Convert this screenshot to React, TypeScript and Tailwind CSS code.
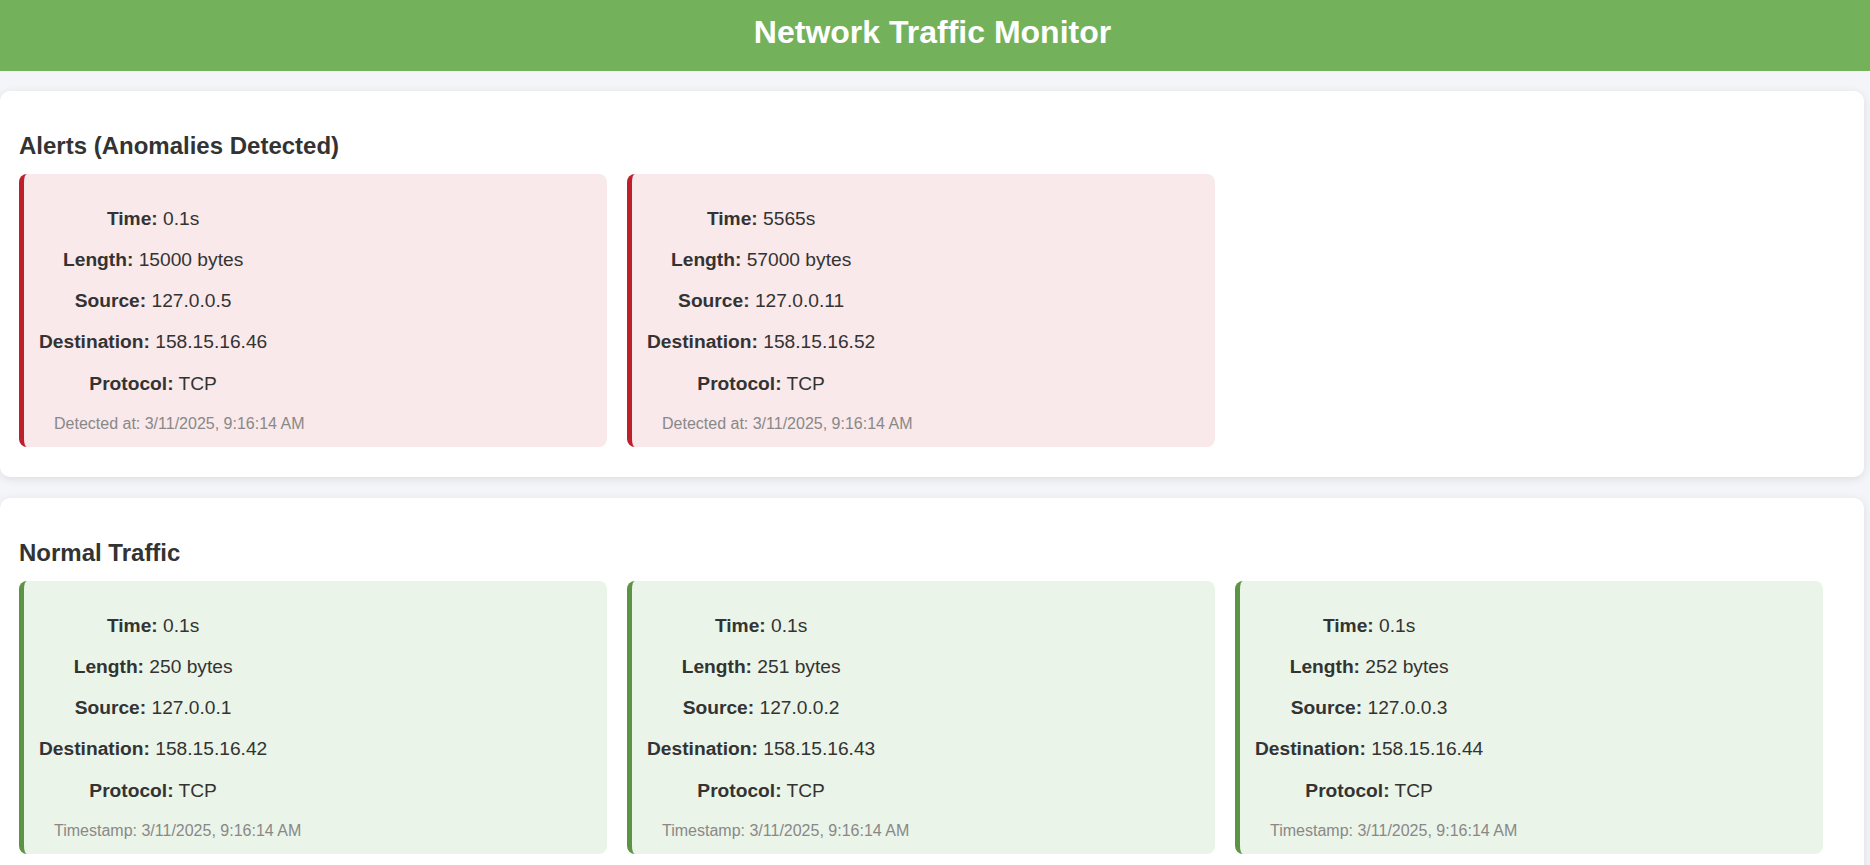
import React from "react";

type Pkt = { time: string; length: string; source: string; dest: string; protocol: string };

const alerts: Pkt[] = [
  { time: "0.1s", length: "15000 bytes", source: "127.0.0.5", dest: "158.15.16.46", protocol: "TCP" },
  { time: "5565s", length: "57000 bytes", source: "127.0.0.11", dest: "158.15.16.52", protocol: "TCP" },
];

const normal: Pkt[] = [
  { time: "0.1s", length: "250 bytes", source: "127.0.0.1", dest: "158.15.16.42", protocol: "TCP" },
  { time: "0.1s", length: "251 bytes", source: "127.0.0.2", dest: "158.15.16.43", protocol: "TCP" },
  { time: "0.1s", length: "252 bytes", source: "127.0.0.3", dest: "158.15.16.44", protocol: "TCP" },
];

function Card({ p, alert }: { p: Pkt; alert: boolean }) {
  const rows: [string, string][] = [
    ["Time:", p.time],
    ["Length:", p.length],
    ["Source:", p.source],
    ["Destination:", p.dest],
    ["Protocol:", p.protocol],
  ];
  return (
    <div
      className={
        alert
          ? "rounded-lg border-l-[5px] border-[#bf1f2b] bg-[#f9e9ea] px-[15px] pb-[14px] pt-[15px]"
          : "rounded-lg border-l-[5px] border-[#5c9445] bg-[#eaf4e8] px-[15px] pb-[14px] pt-[15px]"
      }
    >
      <div className="flex w-fit flex-col gap-[19.2px] py-[19.2px] text-center text-[19.2px] leading-[22px] text-[#333]">
        {rows.map(([k, v]) => (
          <p key={k}>
            <span className="font-bold">{k}</span> {v}
          </p>
        ))}
      </div>
      <div className="ml-[15px] mt-[1px] text-[16px] leading-[18.4px] text-[#888]">
        {alert ? "Detected at: " : "Timestamp: "}3/11/2025, 9:16:14 AM
      </div>
    </div>
  );
}

function Section({ title, items, alert }: { title: string; items: Pkt[]; alert: boolean }) {
  return (
    <section className="rounded-[10px] bg-white px-[19px] pb-[30px] pt-[20px] shadow-[0_2px_10px_rgba(0,0,0,0.1)]">
      <h2 className="mb-[14px] mt-[21px] text-[24px] font-bold leading-[27.6px] text-[#333]">{title}</h2>
      <div className="grid grid-cols-[repeat(3,588px)] gap-x-[20px]">
        {items.map((p, i) => (
          <Card key={i} p={p} alert={alert} />
        ))}
      </div>
    </section>
  );
}

export default function App() {
  return (
    <div className="min-h-screen bg-[#f4f5f9] font-['Liberation_Sans',Arial,sans-serif] text-[#333]">
      <header className="h-[71px] bg-[#73b25b] pr-[5px] pt-[14px] text-center">
        <h1 className="text-[32px] font-bold leading-[36px] text-white">Network Traffic Monitor</h1>
      </header>
      <main className="flex flex-col gap-[21px] pr-[6px] pt-[20px]">
        <Section title="Alerts (Anomalies Detected)" items={alerts} alert={true} />
        <Section title="Normal Traffic" items={normal} alert={false} />
      </main>
    </div>
  );
}
